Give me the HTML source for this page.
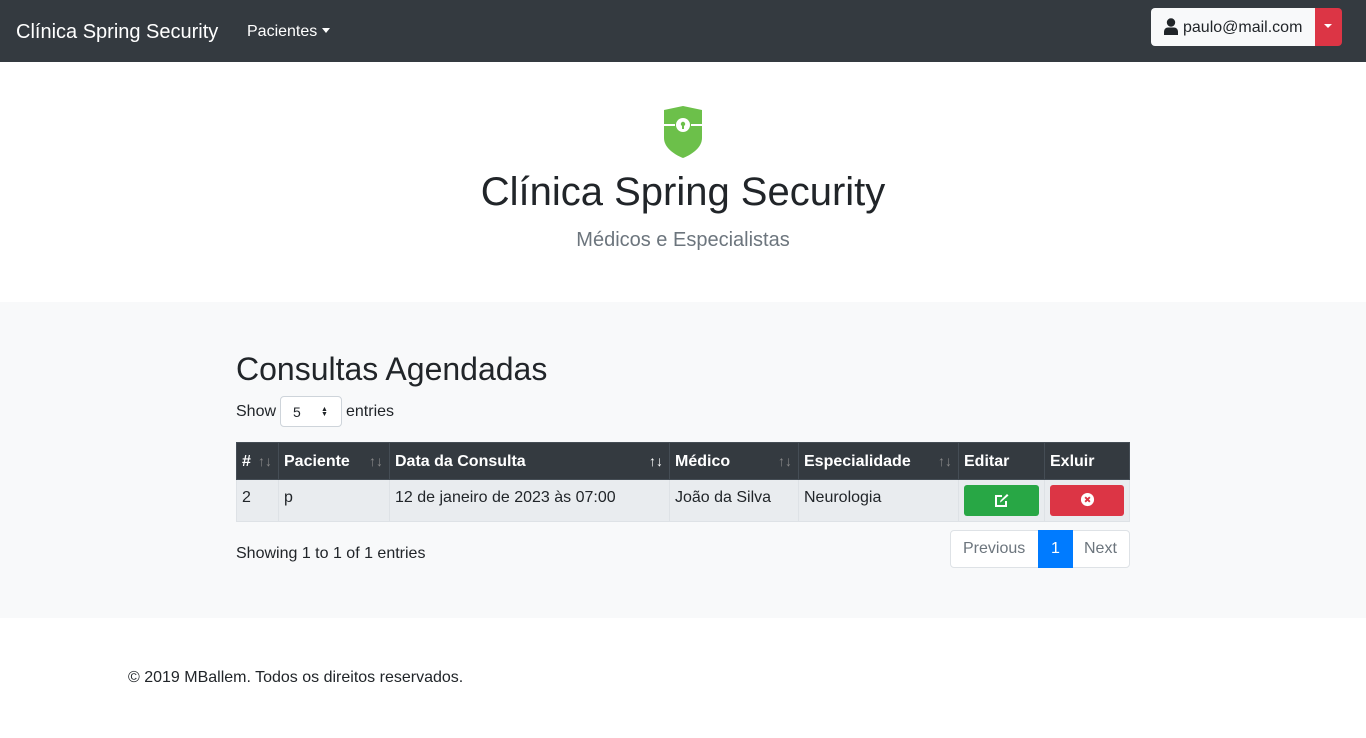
<!DOCTYPE html>
<html><head><meta charset="utf-8"><style>
*{box-sizing:border-box;margin:0;padding:0}
body{width:1366px;height:738px;font-family:"Liberation Sans",sans-serif;color:#212529;background:#fff;font-size:16px;position:relative;overflow:hidden}
.nav{position:absolute;left:0;top:0;width:1366px;height:62px;background:#343a40}
.abs{position:absolute;white-space:nowrap}
.hero{position:absolute;top:302px;left:0;width:1366px;height:316px;background:#f8f9fa}
table{position:absolute;left:236px;top:442px;width:894px;border-collapse:collapse}
th,td{border:1px solid #dee2e6;text-align:left;padding:0 5px;vertical-align:top}
th{background:#343a40;color:#fff;height:37px;border-color:#454d55;vertical-align:middle;font-weight:bold;position:relative;padding-top:1px}
th .s{position:absolute;right:6px;top:10px;color:#888;font-weight:normal;font-size:14px}
td{background:#e9ecef;height:42px;padding-top:9px}
.btn{display:block;height:31px;border-radius:3px;margin-top:-4px;color:#fff;text-align:center;padding-top:7px}
</style></head><body>
<div class="nav"></div>
<div class="abs" style="left:16px;top:21px;font-size:20px;color:#fff">Clínica Spring Security</div>
<div class="abs" style="left:247px;top:23px;color:#fff">Pacientes <span style="display:inline-block;border-top:5px solid #fff;border-left:4px solid transparent;border-right:4px solid transparent;vertical-align:3px"></span></div>
<div class="abs" style="left:1151px;top:8px;width:164px;height:38px;background:#f8f9fa;border-radius:4px 0 0 4px"></div>
<div class="abs" style="left:1315px;top:8px;width:27px;height:38px;background:#dc3545;border-radius:0 4px 4px 0"></div>
<div class="abs" style="left:1324px;top:24px;border-top:4px solid #fff;border-left:4px solid transparent;border-right:4px solid transparent"></div>
<svg class="abs" style="left:1164px;top:18px" width="14" height="17" viewBox="0 0 14 17"><circle cx="7" cy="4.5" r="4.2" fill="#212529"/><path d="M0 17v-3c0-3 2-4.5 4-4.5h6c2 0 4 1.5 4 4.5v3z" fill="#212529"/></svg>
<div class="abs" style="left:1183px;top:19px;font-size:16px">paulo@mail.com</div>
<svg class="abs" style="left:663px;top:105px" width="40" height="54" viewBox="0 0 40 54"><path d="M1 5 20 1 39 5V33C39 42 30 49 20 53 10 49 1 42 1 33Z" fill="#6cc04a"/><path d="M1 20h11M28 20h11" stroke="#fff" stroke-width="2"/><circle cx="20" cy="20" r="7" fill="#fff"/><circle cx="20" cy="19" r="2.2" fill="#6cc04a"/><rect x="19" y="19" width="2" height="5" fill="#6cc04a"/></svg>
<div class="abs" style="left:0;width:1366px;text-align:center;top:170px;font-size:40px">Clínica Spring Security</div>
<div class="abs" style="left:0;width:1366px;text-align:center;top:229px;font-size:20px;color:#6c757d">Médicos e Especialistas</div>
<div class="hero"></div>
<div class="abs" style="left:236px;top:351px;font-size:32px">Consultas Agendadas</div>
<div class="abs" style="left:236px;top:403px">Show</div>
<div class="abs" style="left:280px;top:396px;width:62px;height:31px;border:1px solid #ced4da;border-radius:4px;background:#fff;font-size:14px;padding:7px 0 0 12px">5<span style="position:absolute;left:40px;top:10px;font-size:7px;line-height:5px">▲<br>▼</span></div>
<div class="abs" style="left:346px;top:403px">entries</div>
<table>
<tr><th style="width:42px">#<span class="s">↑↓</span></th><th style="width:111px">Paciente<span class="s">↑↓</span></th><th style="width:280px">Data da Consulta<span class="s" style="color:#fff">↑↓</span></th><th style="width:129px">Médico<span class="s">↑↓</span></th><th style="width:160px">Especialidade<span class="s">↑↓</span></th><th style="width:86px">Editar</th><th>Exluir</th></tr>
<tr><td>2</td><td>p</td><td>12 de janeiro de 2023 às 07:00</td><td>João da Silva</td><td>Neurologia</td><td><span class="btn" style="background:#28a745"><svg width="16" height="16" viewBox="0 0 16 16"><path d="M12 9v5H2V4h6" fill="none" stroke="#fff" stroke-width="2"/><path d="M7 10l-1 .5.5-2L13 2l1.5 1.5z" fill="#fff"/></svg></span></td><td><span class="btn" style="background:#dc3545"><svg width="15" height="15" viewBox="0 0 16 16"><circle cx="8" cy="8" r="7" fill="#fff"/><path d="M5.5 5.5l5 5M10.5 5.5l-5 5" stroke="#dc3545" stroke-width="2"/></svg></span></td></tr>
</table>
<div class="abs" style="left:236px;top:545px">Showing 1 to 1 of 1 entries</div>
<div class="abs" style="left:950px;top:530px;width:180px;height:38px;border:1px solid #dee2e6;border-radius:4px;background:#fff"></div>
<div class="abs" style="left:963px;top:540px;color:#6c757d">Previous</div>
<div class="abs" style="left:1038px;top:530px;width:35px;height:38px;background:#007bff;color:#fff;text-align:center;padding-top:10px">1</div>
<div class="abs" style="left:1084px;top:540px;color:#6c757d">Next</div>
<div class="abs" style="left:128px;top:669px">© 2019 MBallem. Todos os direitos reservados.</div>
</body></html>
